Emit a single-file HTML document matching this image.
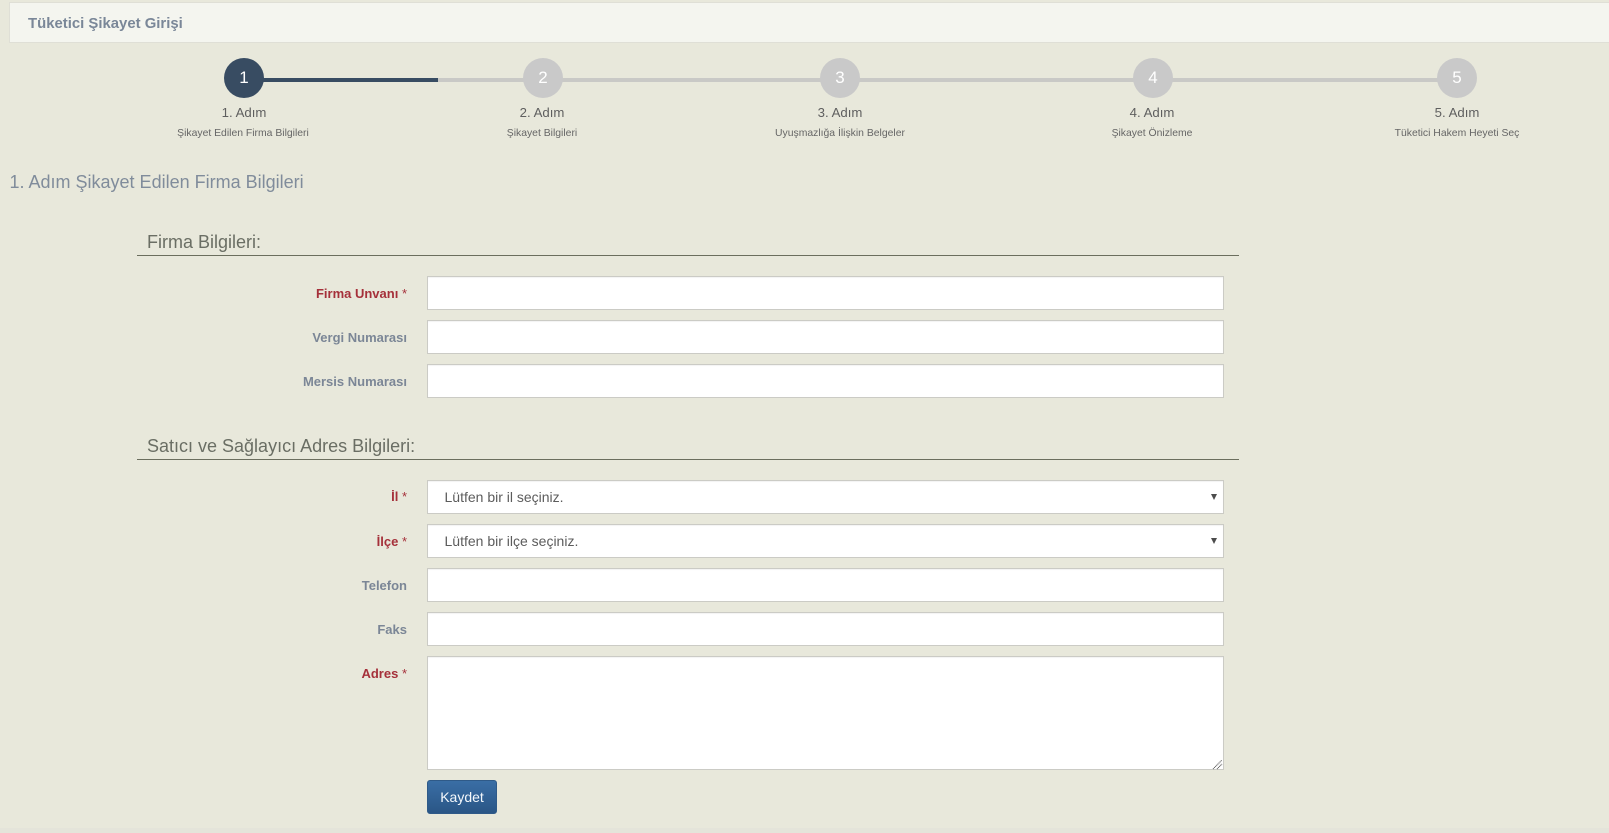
<!DOCTYPE html>
<html lang="tr">
<head>
<meta charset="utf-8">
<title>Tüketici Şikayet Girişi</title>
<style>
html,body{margin:0;padding:0;width:1609px;height:833px;overflow:hidden;background:#e8e8db;font-family:"Liberation Sans",Arial,sans-serif;color:#555}
div,span{position:absolute;box-sizing:border-box;white-space:nowrap}
.top{left:9px;top:2px;width:1600px;height:41px;background:#f4f5ef;border:1px solid #dfdfd6;border-right:0}
.top span{left:18px;top:2px;line-height:39px;font-size:14.9px;font-weight:bold;color:#7a8798}
.line{top:78px;height:4px;background:#c9c9c6}
.c{top:58px;width:40px;height:40px;margin-left:-20px;border-radius:50%;background:#c9c9c9;color:#fff;font-size:17px;line-height:39px;text-align:center}
.s1,.s2{width:300px;margin-left:-150px;text-align:center}
.s1{top:105px;font-size:13.2px;line-height:16px;color:#5f5f5f}
.s2{top:127px;font-size:10.4px;line-height:14px;color:#666}
.h{left:9.5px;top:171px;font-size:18px;line-height:22px;color:#808c9b}
.sec{left:147px;font-size:18px;line-height:22px;color:#6a6e64}
.hr{left:137px;width:1102px;height:1px;background:#6b6e5e}
.l{left:207px;width:200px;text-align:right;font-size:13px;font-weight:bold;line-height:16px;color:#7b8696}
.r{color:#a5303a}.r i{font-style:normal;font-weight:normal}
.f{left:427px;width:797px;height:34px;background:#fff;border:1px solid #cbcbc5;box-shadow:inset 0 1px 1px rgba(0,0,0,.05)}
.f span{left:16.5px;top:0;line-height:32px;font-size:14px;color:#5c5c5c}
.arr{left:auto!important;right:6px;top:13px!important;width:0;height:0;border-left:3px solid transparent;border-right:3px solid transparent;border-top:6px solid #4c4c4c}
.btn{left:427px;top:780px;width:70px;height:34px;border:1px solid #2f5a88;border-radius:3px;background:linear-gradient(#3a6ea5,#2a5686);color:#f4f8fc;font-size:14px;line-height:32px;text-align:center}
.foot{left:0;top:828px;width:1609px;height:5px;background:#e4e4da}
svg{position:absolute;left:1212px;top:759px}
</style>
</head>
<body>
<div class="top"><span>Tüketici Şikayet Girişi</span></div>

<div class="line" style="left:244px;width:1213px"></div>
<div class="line" style="left:244px;width:194px;background:#384c62"></div>
<div class="c" style="left:244px;background:#384c62">1</div>
<div class="c" style="left:543px">2</div>
<div class="c" style="left:840px">3</div>
<div class="c" style="left:1153px">4</div>
<div class="c" style="left:1457px">5</div>

<div class="s1" style="left:244px">1. Adım</div><div class="s2" style="left:243px">Şikayet Edilen Firma Bilgileri</div>
<div class="s1" style="left:542px">2. Adım</div><div class="s2" style="left:542px">Şikayet Bilgileri</div>
<div class="s1" style="left:840px">3. Adım</div><div class="s2" style="left:840px">Uyuşmazlığa İlişkin Belgeler</div>
<div class="s1" style="left:1152px">4. Adım</div><div class="s2" style="left:1152px">Şikayet Önizleme</div>
<div class="s1" style="left:1457px">5. Adım</div><div class="s2" style="left:1457px">Tüketici Hakem Heyeti Seç</div>

<div class="h">1. Adım Şikayet Edilen Firma Bilgileri</div>

<div class="sec" style="top:231px">Firma Bilgileri:</div>
<div class="hr" style="top:255px"></div>
<div class="l r" style="top:286px">Firma Unvanı <i>*</i></div><div class="f" style="top:276px"></div>
<div class="l" style="top:330px">Vergi Numarası</div><div class="f" style="top:320px"></div>
<div class="l" style="top:374px">Mersis Numarası</div><div class="f" style="top:364px"></div>

<div class="sec" style="top:435px">Satıcı ve Sağlayıcı Adres Bilgileri:</div>
<div class="hr" style="top:459px"></div>
<div class="l r" style="top:489px">İl <i>*</i></div><div class="f" style="top:480px"><span>Lütfen bir il seçiniz.</span><span class="arr"></span></div>
<div class="l r" style="top:534px">İlçe <i>*</i></div><div class="f" style="top:524px"><span>Lütfen bir ilçe seçiniz.</span><span class="arr"></span></div>
<div class="l" style="top:578px">Telefon</div><div class="f" style="top:568px"></div>
<div class="l" style="top:622px">Faks</div><div class="f" style="top:612px"></div>
<div class="l r" style="top:666px">Adres <i>*</i></div><div class="f" style="top:656px;height:114px"></div>
<svg width="11" height="11" viewBox="0 0 11 11"><path d="M1 10 10 1M5 10 10 5" stroke="#555" stroke-width="1" stroke-dasharray="1 .6" fill="none"/></svg>

<div class="btn">Kaydet</div>
<div class="foot"></div>
</body>
</html>
